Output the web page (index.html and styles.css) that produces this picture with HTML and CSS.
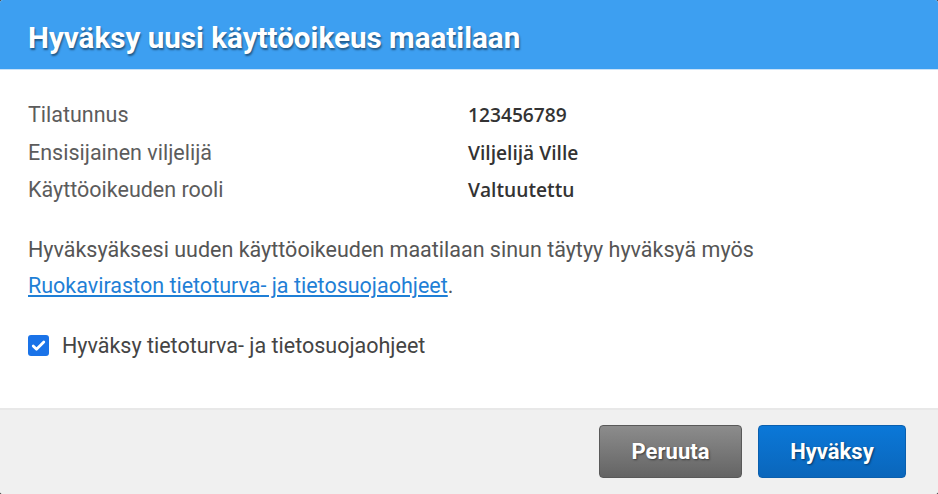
FILE: index.html
```html
<!DOCTYPE html>
<html lang="fi">
<head>
<meta charset="utf-8">
<title>Hyväksy uusi käyttöoikeus maatilaan</title>
<link rel="stylesheet" href="styles.css">
</head>
<body>
<div class="dialog">
  <header class="dialog-header">
    <h1 class="dialog-title">Hyväksy uusi käyttöoikeus maatilaan</h1>
  </header>
  <main class="dialog-body">
    <dl class="info">
      <div class="info-row"><dt>Tilatunnus</dt><dd>123456789</dd></div>
      <div class="info-row"><dt>Ensisijainen viljelijä</dt><dd>Viljelijä Ville</dd></div>
      <div class="info-row"><dt>Käyttöoikeuden rooli</dt><dd>Valtuutettu</dd></div>
    </dl>
    <p class="notice">Hyväksyäksesi uuden käyttöoikeuden maatilaan sinun täytyy hyväksyä myös<br><a href="#" class="link">Ruokaviraston tietoturva- ja tietosuojaohjeet</a>.</p>
    <label class="check">
      <span class="check-box"><svg viewBox="0 0 21 21" width="21" height="21"><path d="M5.2 11l3.3 3.3L15.8 7" fill="none" stroke="#fff" stroke-width="2.7" stroke-linecap="round" stroke-linejoin="round"/></svg></span>
      <span class="check-label">Hyväksy tietoturva- ja tietosuojaohjeet</span>
    </label>
  </main>
  <footer class="dialog-footer">
    <button class="btn btn-cancel">Peruuta</button>
    <button class="btn btn-ok">Hyväksy</button>
  </footer>
</div>
</body>
</html>
```
FILE: styles.css
```css
html, body {
  margin: 0;
  padding: 0;
  background: #3a3a3a;
}
.dialog {
  width: 938px;
  height: 494px;
  background: #fff;
  border-radius: 3px;
  overflow: hidden;
  display: flex;
  flex-direction: column;
  font-family: Roboto, "Liberation Sans", sans-serif;
}
.dialog-header {
  height: 70px;
  background: #3d9ff1;
  border-bottom: 1px solid #c9e2f8;
  display: flex;
  align-items: center;
  padding: 6px 28px 0;
  box-sizing: border-box;
  flex: none;
}
.dialog-title {
  margin: 0;
  color: #fff;
  font-size: 29.6px;
  font-weight: 700;
  text-shadow: 1px 2px 2px rgba(0,0,0,0.45);
}
.dialog-body {
  flex: 1;
  padding: 26px 28px 0;
}
.info {
  margin: 0;
  display: flex;
  flex-direction: column;
}
.info-row {
  display: flex;
  align-items: center;
  height: 37.5px;
}
.info dt {
  width: 440px;
  color: #5c5c5c;
  font-size: 21.5px;
  font-weight: 400;
}
.info dd {
  margin: 0;
  color: #333;
  font-family: "Open Sans", "Liberation Sans", sans-serif;
  font-size: 19.2px;
  font-weight: 600;
}
.notice {
  margin: 23px 0 0;
  color: #555;
  font-size: 21.5px;
  line-height: 36px;
}
.link {
  color: #1f7fd6;
  text-decoration: underline;
}
.check {
  margin-top: 29px;
  display: flex;
  align-items: center;
  gap: 13px;
}
.check-box {
  width: 21px;
  height: 21px;
  border-radius: 3px;
  background: #1a73e8;
  display: flex;
}
.check-label {
  color: #444;
  font-size: 21.5px;
}
.dialog-footer {
  height: 86px;
  flex: none;
  box-sizing: border-box;
  background: #f0f0f0;
  border-top: 2px solid #e8e8e8;
  display: flex;
  justify-content: flex-end;
  align-items: flex-start;
  gap: 16px;
  padding: 15px 32px 0;
}
.btn {
  height: 53px;
  border-radius: 4px;
  color: #fff;
  font-family: Roboto, "Liberation Sans", sans-serif;
  font-size: 22px;
  font-weight: 700;
  text-shadow: 1px 1px 2px rgba(0,0,0,0.5);
  cursor: pointer;
}
.btn-cancel {
  width: 143px;
  background: linear-gradient(#8c8c8c, #646464);
  border: 1px solid #595959;
}
.btn-ok {
  width: 148px;
  background: linear-gradient(#0b78d8, #0a66bb);
  border: 1px solid #0a5fae;
}
```
